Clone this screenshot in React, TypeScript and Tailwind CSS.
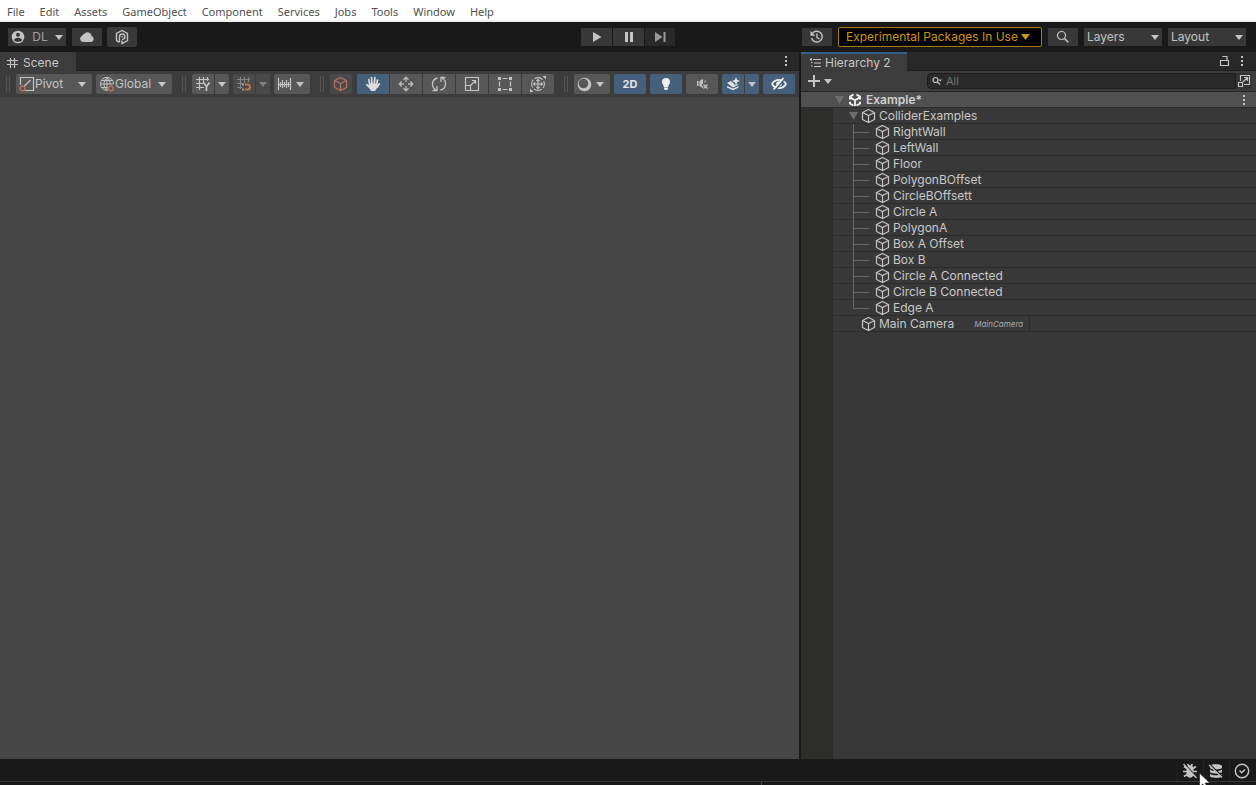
import React from "react";

const MENUS = ["File", "Edit", "Assets", "GameObject", "Component", "Services", "Jobs", "Tools", "Window", "Help"];

const CHILDREN = [
  "RightWall",
  "LeftWall",
  "Floor",
  "PolygonBOffset",
  "CircleBOffsett",
  "Circle A",
  "PolygonA",
  "Box A Offset",
  "Box B",
  "Circle A Connected",
  "Circle B Connected",
  "Edge A",
];

type IconProps = { children: React.ReactNode; className?: string; w?: number; h?: number };

function Icon({ children, className = "text-[#c4c4c4]", w = 16, h = 16 }: IconProps) {
  return (
    <svg
      width={w}
      height={h}
      viewBox={`0 0 ${w} ${h}`}
      fill="none"
      stroke="currentColor"
      strokeWidth="1.2"
      aria-hidden="true"
      className={`shrink-0 ${className}`}
    >
      {children}
    </svg>
  );
}

function Caret({ className = "text-[#c4c4c4]" }: { className?: string }) {
  return (
    <Icon w={8} h={5} className={className}>
      <path d="M0 0h8L4 5z" fill="currentColor" stroke="none" />
    </Icon>
  );
}

function Kebab() {
  return (
    <Icon w={4} h={12}>
      <path d="M1 1h2v2H1zM1 5h2v2H1zM1 9h2v2H1z" fill="currentColor" stroke="none" />
    </Icon>
  );
}

function Cube({ className = "text-[#c4c4c4]" }: { className?: string }) {
  return (
    <Icon w={15} h={16} className={className}>
      <path d="M7.500 1.500 13.500 4.500v7L7.500 14.500 1.500 11.500v-7zM1.500 4.500l6 3 6-3M7.500 7.500v7" strokeWidth="1.200" />
    </Icon>
  );
}

function Grip() {
  return <div className="mx-1.5 h-4 w-1 shrink-0 border-x border-[#555555]" />;
}

type ButtonProps = { label: string; children: React.ReactNode; className?: string };

function BarButton({ label, children, className = "h-[18px] w-[30px] bg-[#383838]" }: ButtonProps) {
  return (
    <button type="button" aria-label={label} className={`flex shrink-0 items-center justify-center ${className}`}>
      {children}
    </button>
  );
}

function ToolButton({ label, children, className = "w-8 rounded-xs bg-[#575757]" }: ButtonProps) {
  return (
    <button type="button" aria-label={label} className={`flex h-5 shrink-0 items-center justify-center ${className}`}>
      {children}
    </button>
  );
}

function BarSelect({ label }: { label: string }) {
  return (
    <div className="grid w-[78px] shrink-0 items-center bg-[#383838]">
      <select aria-label={label} className="col-start-1 row-start-1 h-[18px] w-full appearance-none bg-transparent pl-[3px] text-[12px] leading-[18px] text-[#c4c4c4]">
        <option>{label}</option>
      </select>
      <span className="pointer-events-none col-start-1 row-start-1 mr-[3px] justify-self-end">
        <Caret />
      </span>
    </div>
  );
}

function ToolSelect({ label, icon }: { label: string; icon: React.ReactNode }) {
  return (
    <div className="grid w-[76px] shrink-0 items-center rounded-xs bg-[#575757]">
      <span className="pointer-events-none col-start-1 row-start-1 ml-[3px]">{icon}</span>
      <select aria-label={label} className="col-start-1 row-start-1 h-5 w-full appearance-none bg-transparent pl-[19px] text-[12px] leading-5 text-[#c4c4c4]">
        <option>{label}</option>
      </select>
      <span className="pointer-events-none col-start-1 row-start-1 mr-1.5 justify-self-end">
        <Caret />
      </span>
    </div>
  );
}

function MenuBar() {
  return (
    <nav className="flex h-[22px] shrink-0 items-center gap-[15px] overflow-hidden border-b-2 border-[#f0f0f0] bg-white pl-[7px] font-['Noto_Sans',sans-serif] text-[11px] leading-5 text-[#505050]">
      {MENUS.map((m) => (
        <button key={m} type="button" className="pt-1">
          {m}
        </button>
      ))}
    </nav>
  );
}

function MainToolbar() {
  return (
    <header className="grid h-[30px] shrink-0 grid-cols-[1fr_auto_1fr] items-center bg-[#191919]">
      <div className="flex items-center pl-2">
        <BarButton label="Account" className="h-[18px] w-[58px] gap-[7px] bg-[#383838]">
          <Icon w={14} h={14}>
            <circle cx="7" cy="7" r="6.300" fill="currentColor" stroke="none" />
            <circle cx="7" cy="4.800" r="2" fill="#383838" stroke="none" />
            <path d="M3 10.200c0-3.400 8-3.400 8 0-2 2.100-6 2.100-8 0z" fill="#383838" stroke="none" />
          </Icon>
          <span className="text-[12px] leading-[18px] text-[#a0a0a0]">DL</span>
          <Caret />
        </BarButton>
        <BarButton label="Cloud" className="ml-1.5 h-[18px] w-[30px] bg-[#383838]">
          <Icon w={16} h={12}>
            <path d="M4 11a3.200 3.200 0 0 1-1-6.100A2.600 2.600 0 0 1 5.200 3a4.200 4.200 0 0 1 7.500 1.900A3.200 3.200 0 0 1 12.200 11z" fill="currentColor" stroke="none" />
          </Icon>
        </BarButton>
        <BarButton label="Packages" className="ml-[5px] h-5 w-[30px] rounded-xs bg-[#383838]">
          <Icon>
            <path d="M5.500 13.400 2.500 11.500v-7L8 1.500l5.500 3v7L8 14.600v-3M5.500 13V7.500a2.700 2.700 0 1 1 2.600 2.900" strokeWidth="1.400" />
            <circle cx="8.100" cy="7.600" r=".9" fill="currentColor" stroke="none" />
          </Icon>
        </BarButton>
      </div>
      <div className="flex gap-px">
        <BarButton label="Play" className="h-[18px] w-[31px] bg-[#383838]">
          <Icon w={10} h={10}>
            <path d="M1 0v10l8.500-5z" fill="currentColor" stroke="none" />
          </Icon>
        </BarButton>
        <BarButton label="Pause" className="h-[18px] w-[31px] bg-[#383838]">
          <Icon w={10} h={10}>
            <path d="M1 0h3v10H1zM6 0h3v10H6z" fill="currentColor" stroke="none" />
          </Icon>
        </BarButton>
        <BarButton label="Step" className="h-[18px] w-[30px] bg-[#292929]">
          <Icon w={11} h={10} className="text-[#9a9a9a]">
            <path d="M0 0v10l7.500-5zM8.500 0h2v10h-2z" fill="currentColor" stroke="none" />
          </Icon>
        </BarButton>
      </div>
      <div className="flex items-center justify-end gap-1.5 pr-2.5">
        <BarButton label="Undo history">
          <Icon>
            <path d="M3 5.200A5.400 5.400 0 1 1 2.600 9M8 4.500v4l2.500 1.500" strokeWidth="1.400" />
            <path d="M1.500 2v4.800h4.800z" fill="currentColor" stroke="none" />
          </Icon>
        </BarButton>
        <button type="button" className="flex h-5 w-[204px] shrink-0 items-center gap-[3px] whitespace-nowrap rounded-xs border border-[#a67a0c] bg-black pl-[7px] text-[12px] leading-[18px] text-[#c99708]">
          Experimental Packages In Use
          <Icon w={9} h={6} className="text-[#c99708]">
            <path d="M0 0h9L4.500 6z" fill="currentColor" stroke="none" />
          </Icon>
        </button>
        <BarButton label="Search">
          <Icon>
            <circle cx="6.500" cy="6.500" r="4" />
            <path d="m9.500 9.500 3.800 3.800" strokeWidth="1.600" />
          </Icon>
        </BarButton>
        <BarSelect label="Layers" />
        <BarSelect label="Layout" />
      </div>
    </header>
  );
}

function SceneToolbar() {
  return (
    <div className="flex h-[26px] shrink-0 items-center overflow-hidden bg-[#3c3c3c]">
      <div className="flex items-center">
        <Grip />
        <div className="flex gap-1">
          <ToolSelect
            label="Pivot"
            icon={
              <Icon>
                <path d="M1.500 9V1.500h13v13H6M5 10.500l6.500-6.500" />
                <circle cx="3.500" cy="12.500" r="2.300" stroke="#c07860" />
              </Icon>
            }
          />
          <ToolSelect
            label="Global"
            icon={
              <Icon>
                <path d="M8.500 14.300A6.500 6.500 0 1 1 14.500 8M1.500 8h13M2.500 4.500h11M2.500 11.500h6M8 1.500v12M8 1.500c-4 3.500-4 9.500 0 13M8 1.500c2.600 2 3.300 4.500 3.200 7" strokeWidth="1" />
                <circle cx="12" cy="12.500" r="2.300" stroke="#c07860" />
              </Icon>
            }
          />
        </div>
      </div>

      <div className="ml-1 flex items-center">
        <Grip />
        <div className="flex gap-1">
          <div className="flex gap-px">
            <ToolButton label="Grid visibility" className="w-[22px] rounded-l-xs bg-[#575757]">
              <Icon>
                <path d="M4.500 1v13M8.500 1v6M12.500 1v4M1 3.500h13M1 7.500h7M1 11.500h8" />
                <path d="m8.500 6.500 3 4V15m0-4.500 3-4" strokeWidth="1.700" />
              </Icon>
            </ToolButton>
            <ToolButton label="Grid options" className="w-[14px] rounded-r-xs bg-[#575757]">
              <Caret />
            </ToolButton>
          </div>
          <div className="flex gap-px">
            <ToolButton label="Grid snapping" className="w-[22px] rounded-l-xs bg-[#494949]">
              <Icon className="text-[#858585]">
                <path d="M4.500 1v12M8.500 1v6M12.500 1v5M1 3.500h13M1 7.500h6M1 11.500h5" />
                <path d="M9 8.500h2.500a2.500 2.500 0 0 1 0 5H9" stroke="#b8784f" strokeWidth="2" />
                <path d="M6 7.500h2v2H6zM6 12.500h2v2H6z" fill="#a0a0a0" stroke="none" />
              </Icon>
            </ToolButton>
            <ToolButton label="Snapping options" className="w-[14px] rounded-r-xs bg-[#494949]">
              <Caret className="text-[#808080]" />
            </ToolButton>
          </div>
          <ToolButton label="Snap increment" className="w-9 gap-1 rounded-xs bg-[#575757] pr-[3px]">
            <Icon w={15} h={14}>
              <path d="M1.500 1v12M13.500 1v12M1 7.500h12M3.500 5v5M5.500 3v8M7.500 5v5M9.500 3v8M11.500 5v5" strokeWidth="1.200" />
            </Icon>
            <Caret />
          </ToolButton>
        </div>
      </div>

      <div className="ml-1 flex items-center">
        <Grip />
        <ToolButton label="Tool context" className="w-[22px] rounded-xs bg-[#494949] pr-px">
          <Cube className="text-[#b57660]" />
        </ToolButton>
        <div className="ml-[5px] flex gap-px">
          <ToolButton label="View tool" className="w-8 rounded-l-xs bg-[#46607c]">
            <Icon className="text-[#dcdcdc]">
              <path d="M4.700 8.500 3.900 3.700M7 8 6.500 1.700M9.300 8l.5-6.300M11.500 9l1-5M12.300 11l2-3.200M4.800 11.500 1.700 8.700" strokeWidth="1.700" strokeLinecap="round" />
              <path d="M4 7.500h8.400v3l-.9 2.500-1.500 2H6.200L3.500 11z" fill="currentColor" stroke="none" />
            </Icon>
          </ToolButton>
          <ToolButton label="Move tool" className="w-8 bg-[#575757]">
            <Icon className="text-[#b8b8b8]">
              <path d="M8 2v4M8 10v4M2 8h4M10 8h4M5.500 3.700 8 1.200l2.500 2.500M5.500 12.300 8 14.800l2.500-2.500M3.700 5.500 1.200 8l2.500 2.500M12.300 5.500 14.800 8l-2.500 2.500" strokeWidth="1.300" />
            </Icon>
          </ToolButton>
          <ToolButton label="Rotate tool" className="w-8 bg-[#575757]">
            <Icon>
              <path d="M5 14C-.3 11 .5 3.500 6.500 2M11 2c5.300 3 4.500 10.500-1.500 12M1.500 14.500h4.500v-4.500M14.500 1.500H10v4.500" strokeWidth="1.300" />
            </Icon>
          </ToolButton>
          <ToolButton label="Scale tool" className="w-8 bg-[#575757]">
            <Icon>
              <path d="M1.500 1.500h13v13h-13zM1.500 9.500h5v5M6.500 9.500l5-5M8 4.500h3.500V8" />
            </Icon>
          </ToolButton>
          <ToolButton label="Rect tool" className="w-8 bg-[#575757]">
            <Icon>
              <path d="M5.500 2.500h5M5.500 13.500h5M2.500 5.500v5M13.500 5.500v5" />
              <path d="M1 1h3v3H1zM12 1h3v3h-3zM1 12h3v3H1zM12 12h3v3h-3z" fill="currentColor" stroke="none" />
            </Icon>
          </ToolButton>
          <ToolButton label="Transform tool" className="w-8 rounded-r-xs bg-[#575757]">
            <Icon>
              <circle cx="8" cy="8" r="6.400" strokeWidth="1.100" strokeDasharray="8.500 1.550" strokeDashoffset="4.250" />
              <path d="M8 3.500v9M3.500 8h9M6.300 5.200 8 3.500l1.700 1.700M6.300 10.800 8 12.500l1.700-1.700M5.200 6.300 3.500 8l1.700 1.700M10.800 6.300 12.500 8l-1.700 1.700" strokeWidth="1.100" />
              <path d="M12.500 0H16v3.500zM0 12.500V16h3.500z" fill="currentColor" stroke="none" />
            </Icon>
          </ToolButton>
        </div>
      </div>

      <div className="ml-1 flex items-center">
        <Grip />
        <div className="flex gap-1">
          <ToolButton label="Draw mode" className="w-9 gap-1 rounded-xs bg-[#575757] pr-[3px]">
            <Icon w={15} h={15}>
              <circle cx="7.500" cy="7.500" r="6.800" fill="currentColor" stroke="none" />
              <circle cx="6.500" cy="6.500" r="4.800" fill="#575757" stroke="none" />
            </Icon>
            <Caret />
          </ToolButton>
          <ToolButton label="2D view" className="w-8 rounded-xs bg-[#46607c]">
            <span className="text-[11px] font-bold leading-5 text-[#e4e4e4]">2D</span>
          </ToolButton>
          <ToolButton label="Scene lighting" className="w-8 rounded-xs bg-[#46607c]">
            <Icon className="text-[#eeeeee]">
              <path d="M8 2a4 4 0 0 1 4 4c0 2-1.500 2.500-1.800 5H5.800C5.500 8.500 4 8 4 6a4 4 0 0 1 4-4zM6 11.500h4V13l-1 1H7l-1-1z" fill="currentColor" stroke="none" />
            </Icon>
          </ToolButton>
          <ToolButton label="Scene audio" className="w-8 rounded-xs bg-[#575757]">
            <Icon>
              <path d="M3 5h1.500v5H3zM5.500 5 9 3v4.500L7.500 9 9 10.500V12L5.500 10zM10.500 4.500v2h1V4.500z" fill="currentColor" stroke="none" />
              <path d="m9.500 8.500 4 4M13.500 8.500l-4 4" />
            </Icon>
          </ToolButton>
          <div className="flex gap-px">
            <ToolButton label="Scene effects" className="w-[22px] rounded-l-xs bg-[#46607c]">
              <Icon className="text-[#e4e4e4]">
                <path d="m11 1 1.200 2.800L15 5l-2.800 1.200L11 9 9.800 6.200 7 5l2.800-1.200zM2 7l4-2 4 4 3-1v1l-5 2.500zM2 10l6 2.500 5.500-2.300v1.300L8 14.300 2 11.500z" fill="currentColor" stroke="none" />
              </Icon>
            </ToolButton>
            <ToolButton label="Effect options" className="w-[14px] rounded-r-xs bg-[#46607c]">
              <Caret />
            </ToolButton>
          </div>
          <ToolButton label="Hidden objects" className="w-8 rounded-xs bg-[#46607c]">
            <Icon className="text-[#eeeeee]">
              <path d="M1 8c3-5.500 11-5.500 14 0-3 5.500-11 5.500-14 0z" strokeWidth="1.600" />
              <circle cx="8" cy="8" r="2.800" fill="currentColor" stroke="none" />
              <path d="m4 14.500 10-12" stroke="#46607c" strokeWidth="1.500" />
              <path d="m2.500 13.500 10-11.500" strokeWidth="1.600" />
            </Icon>
          </ToolButton>
        </div>
      </div>
    </div>
  );
}

function ScenePanel() {
  return (
    <main className="flex min-w-0 flex-1 flex-col bg-[#464646]">
      <div className="flex h-[19px] shrink-0 items-stretch justify-between border-b border-[#1f1f1f] bg-[#282828] pr-[11px]">
        <div className="-mb-px flex w-[76px] items-center gap-1 rounded-t-xs bg-[#3c3c3c] pl-[6px] pt-0.5">
          <Icon w={13} h={12}>
            <path d="M4.500 1v10M8.500 1v10M1 3.500h11M1 7.500h11" />
          </Icon>
          <h2 className="text-[12px] leading-4 text-[#c8c8c8]">Scene</h2>
        </div>
        <button type="button" aria-label="Scene menu" className="flex items-center">
          <Kebab />
        </button>
      </div>
      <SceneToolbar />
      <div className="flex-1" />
    </main>
  );
}

function Foldout() {
  return (
    <Icon w={9} h={8} className="text-[#6e6e6e]">
      <path d="M0 0h9L4.500 8z" fill="currentColor" stroke="none" />
    </Icon>
  );
}

const ROW = "flex h-4 items-center border-b border-[#2b2b2b] text-[12px] leading-4 text-[#c8c8c8]";

function HierarchyPanel() {
  return (
    <aside className="flex w-[455px] shrink-0 flex-col bg-[#383838]">
      <div className="flex h-[19px] shrink-0 items-stretch justify-between border-b border-[#1f1f1f] bg-[#282828] pr-3">
        <div className="-mb-px flex w-[106px] items-center gap-[3px] border-t-2 border-[#33608a] bg-[#3c3c3c] pl-2">
          <Icon w={13} h={12}>
            <path d="M4 2.500h8M5 6h7M5 9.500h7M1 2.500h2M2 1v3M2 5.500h1.500M2 9h1.500" />
          </Icon>
          <h2 className="whitespace-nowrap text-[12px] leading-4 text-[#c8c8c8]">Hierarchy 2</h2>
        </div>
        <div className="flex items-center gap-2.5">
          <button type="button" aria-label="Lock">
            <Icon w={11} h={12}>
              <path d="M1.500 5.500h8v5h-8zM3.500 1.500h4.500v4" />
            </Icon>
          </button>
          <button type="button" aria-label="Hierarchy menu">
            <Kebab />
          </button>
        </div>
      </div>

      <div className="flex h-[21px] shrink-0 items-center border-b border-[#242424] bg-[#3c3c3c] pl-1.5">
        <button type="button" aria-label="Create" className="flex items-center gap-1">
          <Icon w={13} h={13}>
            <path d="M7 0v12M1 6h12" strokeWidth="2" />
          </Icon>
          <Caret />
        </button>
        <div className="ml-[95px] flex h-4 flex-1 items-center gap-1 rounded-l-sm border border-[#1c1c1c] bg-[#2a2a2a] pl-1">
          <Icon w={10} h={10}>
            <circle cx="3.500" cy="4" r="2.500" />
            <path d="m5.500 6 2.500 2.500" />
            <path d="M6.500 3.500H10L8.300 5.500z" fill="currentColor" stroke="none" />
          </Icon>
          <input aria-label="Search hierarchy" placeholder="All" className="min-w-0 flex-1 bg-transparent text-[11px] leading-[14px] text-[#c8c8c8] outline-none placeholder:text-[#757575]" />
        </div>
        <button type="button" aria-label="Open in search" className="mr-1 flex h-4 w-4 items-center justify-center rounded-r-sm bg-[#323232]">
          <Icon w={14} h={14}>
            <path d="M3.500 7V1.500h9v9H7M1.500 8.500h4v4h-4zM6 8l4-4M7 3.500h3.500V7" />
          </Icon>
        </button>
      </div>

      <div className="flex h-4 shrink-0 items-center border-b border-[#2b2b2b] bg-[#505050] pl-[34px] pr-2.5">
        <Foldout />
        <Icon w={14} h={14} className="ml-1 text-[#f0f0f0]">
          <path d="M5.500 1.500 2 3.600v3M2 8.800v1.700l3.500 2M8.500 12.500l3.500-2V8.800M12 6.600v-3L8.500 1.500" strokeWidth="2" />
          <path d="M7 13V7.200M7 7.200 2.500 4.600M7 7.200l4.500-2.600" strokeWidth="1.800" />
        </Icon>
        <span className="ml-1 flex-1 text-[12px] font-semibold leading-4 text-[#d0d0d0]">Example*</span>
        <button type="button" aria-label="Scene options">
          <Kebab />
        </button>
      </div>

      <div className="flex flex-1">
        <div className="w-8 shrink-0 bg-[#2d2d2b]" />
        <ul className="min-w-0 flex-1">
          <li className={ROW}>
            <span className="ml-4 mr-[3px]">
              <Foldout />
            </span>
            <Cube />
            <span className="ml-[3px]">ColliderExamples</span>
          </li>
          {CHILDREN.map((name, i) => (
            <li key={name} className={ROW}>
              <Icon w={16} h={16} className="ml-5 mr-1.5 text-[#686868]">
                <path d={i === CHILDREN.length - 1 ? "M.5 0v8.500H16" : "M.5 0v16M.5 8.500H16"} strokeWidth="1" />
              </Icon>
              <Cube />
              <span className="ml-[3px]">{name}</span>
            </li>
          ))}
          <li className={ROW}>
            <span className="ml-7">
              <Cube />
            </span>
            <span className="ml-[3px]">Main Camera</span>
            <span className="ml-5 border-r border-[#2b2b2b] pr-1.5 text-[8px] italic leading-4 text-[#a8a8a8]">MainCamera</span>
          </li>
        </ul>
      </div>
    </aside>
  );
}

function StatusBar() {
  return (
    <footer className="relative flex h-[26px] shrink-0 flex-col bg-[#191919]">
      <div className="flex h-[22px] items-center justify-end pt-px">
        <button type="button" aria-label="Debugger" className="flex h-full w-[26px] items-center justify-center border-l border-[#222222] pr-0.5">
          <Icon>
            <path d="M4.500 5.500c0-4.500 7-4.500 7 0V11c0 5-7 5-7 0z" fill="currentColor" stroke="none" />
            <path d="m2 3.500 3 2M14 3.500l-3 2M1 8.500h14M2 13.500l3-2M14 13.500l-3-2M5.500 1 7 3M10.500 1 9 3" strokeWidth="1.700" />
            <path d="m2.500 1 13 14" stroke="#191919" strokeWidth="1.200" />
            <path d="m1.500 1 13 14" />
          </Icon>
        </button>
        <button type="button" aria-label="Cache server" className="flex h-full w-[26px] items-center justify-center border-l border-[#222222] pr-0.5">
          <Icon>
            <path d="M2 3c0-2.500 12-2.500 12 0v1.500c0 2.500-12 2.500-12 0zM2 6.500c2 2 10 2 12 0V9c-2 2-10 2-12 0zM2 10.800c2 2 10 2 12 0V13c0 2.500-12 2.500-12 0z" fill="currentColor" stroke="none" />
            <path d="m2.500 2 13 12.500" stroke="#191919" strokeWidth="1.300" />
            <path d="m1 2 13 12.500" />
          </Icon>
        </button>
        <button type="button" aria-label="Background tasks" className="flex h-full w-[27px] items-center justify-center border-l border-[#222222] pr-0.5">
          <Icon>
            <circle cx="8" cy="8" r="6.700" strokeWidth="1.400" />
            <path d="m5.500 7.500 2.200 2.200 3.300-3.200" strokeWidth="1.500" />
          </Icon>
        </button>
      </div>
      <div className="flex h-1 border-t border-[#383838]">
        <div className="w-[762px] border-r border-[#484848]" />
      </div>
      <svg width="12" height="18" viewBox="0 0 12 18" aria-hidden="true" className="absolute right-[45px] top-[13px]">
        <path d="M.5 1v14l3.300-3 2.200 5 2.500-1-2.200-5h4.500z" fill="#fff" stroke="#111" strokeWidth=".6" />
      </svg>
    </footer>
  );
}

export default function App() {
  return (
    <div className="flex h-screen flex-col overflow-hidden bg-[#191919] font-['Inter',sans-serif]">
      <MenuBar />
      <MainToolbar />
      <div className="flex min-h-0 flex-1 gap-0.5">
        <ScenePanel />
        <HierarchyPanel />
      </div>
      <StatusBar />
    </div>
  );
}
